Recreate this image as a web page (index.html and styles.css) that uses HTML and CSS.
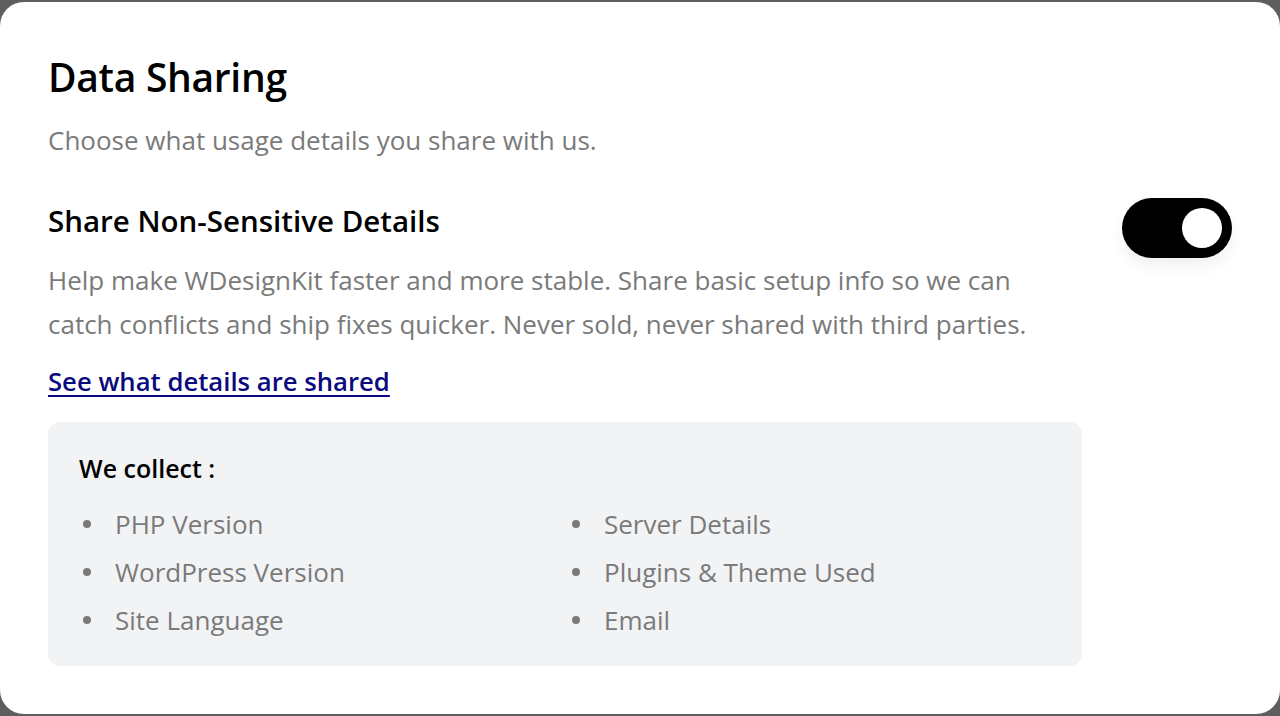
FILE: index.html
```html
<!DOCTYPE html>
<html lang="en">
<head>
  <meta charset="UTF-8" />
  <meta name="viewport" content="width=device-width, initial-scale=1.0" />
  <title>Data Sharing</title>
  <link rel="stylesheet" href="styles.css">
</head>
<body>
  <div class="card">
    <h1 class="title">Data Sharing</h1>
    <p class="subtitle">Choose what usage details you share with us.</p>

    <div class="option">
      <div class="option-text">
        <h2 class="option-title">Share Non-Sensitive Details</h2>
        <p class="option-desc">Help make WDesignKit faster and more stable. Share basic setup info so we can catch conflicts and ship fixes quicker. Never sold, never shared with third parties.</p>
        <a href="#" class="details-link">See what details are shared</a>

        <div class="collect-box">
          <div class="collect-title">We collect :</div>
          <ul class="collect-list">
            <li>PHP Version</li>
            <li>Server Details</li>
            <li>WordPress Version</li>
            <li>Plugins &amp; Theme Used</li>
            <li>Site Language</li>
            <li>Email</li>
          </ul>
        </div>
      </div>

      <label class="switch">
        <input type="checkbox" checked />
        <span class="slider"></span>
      </label>
    </div>
  </div>
</body>
</html>
```

FILE: styles.css
```css
* {
  box-sizing: border-box;
  margin: 0;
  padding: 0;
}

body {
  font-family: 'Open Sans', 'Lato', Arial, sans-serif;
  background-color: #5e5e5e;
  height: 716px;
  overflow: hidden;
  padding-top: 2px;
}

.card {
  background-color: #fff;
  height: 712px;
  border-radius: 24px;
  padding: 51px 48px 0 48px;
}

.title {
  font-size: 39px;
  font-weight: 600;
  color: #000;
  line-height: 48px;
  letter-spacing: -0.3px;
}

.subtitle {
  font-size: 26px;
  color: #7a7a7a;
  line-height: 34px;
  margin-top: 22px;
}

.option {
  display: flex;
  justify-content: space-between;
  align-items: flex-start;
  margin-top: 44px;
}

.option-text {
  width: 1034px;
}

.option-title {
  font-size: 29.5px;
  font-weight: 600;
  color: #000;
  line-height: 40px;
}

.option-desc {
  font-size: 26px;
  color: #7a7a7a;
  line-height: 44px;
  margin-top: 17px;
  max-width: 1000px;
}

.details-link {
  display: inline-block;
  font-size: 25.7px;
  font-weight: 600;
  color: #0a0a80;
  line-height: 36px;
  margin-top: 18px;
  text-decoration: underline;
  text-underline-offset: 4px;
  text-decoration-thickness: 2px;
}

.collect-box {
  background-color: #f2f3f5;
  border-radius: 12px;
  margin-top: 22px;
  padding: 28px 31px 22px 31px;
}

.collect-title {
  font-size: 25px;
  font-weight: 600;
  color: #000;
  line-height: 36px;
}

.collect-list {
  list-style: none;
  display: grid;
  grid-template-columns: 1fr 1fr;
  column-gap: 6px;
  margin-top: 14px;
}

.collect-list li {
  display: flex;
  align-items: center;
  gap: 24px;
  font-size: 26px;
  color: #7a7a7a;
  line-height: 48px;
  padding-left: 4px;
}

.collect-list li::before {
  content: '';
  width: 8px;
  height: 8px;
  border-radius: 50%;
  background-color: #7a7a7a;
  flex-shrink: 0;
}

.switch {
  position: relative;
  display: inline-block;
  width: 110px;
  height: 60px;
  margin-top: -3px;
  flex-shrink: 0;
}

.switch input {
  display: none;
}

.slider {
  position: absolute;
  inset: 0;
  background-color: #000;
  border-radius: 30px;
  box-shadow: 0 8px 16px rgba(0, 0, 0, 0.06);
  cursor: pointer;
}

.slider::after {
  content: '';
  position: absolute;
  width: 40px;
  height: 40px;
  border-radius: 50%;
  background-color: #fff;
  top: 10px;
  left: 10px;
  transition: left 0.2s ease;
}

.switch input:checked + .slider::after {
  left: 60px;
}
```
